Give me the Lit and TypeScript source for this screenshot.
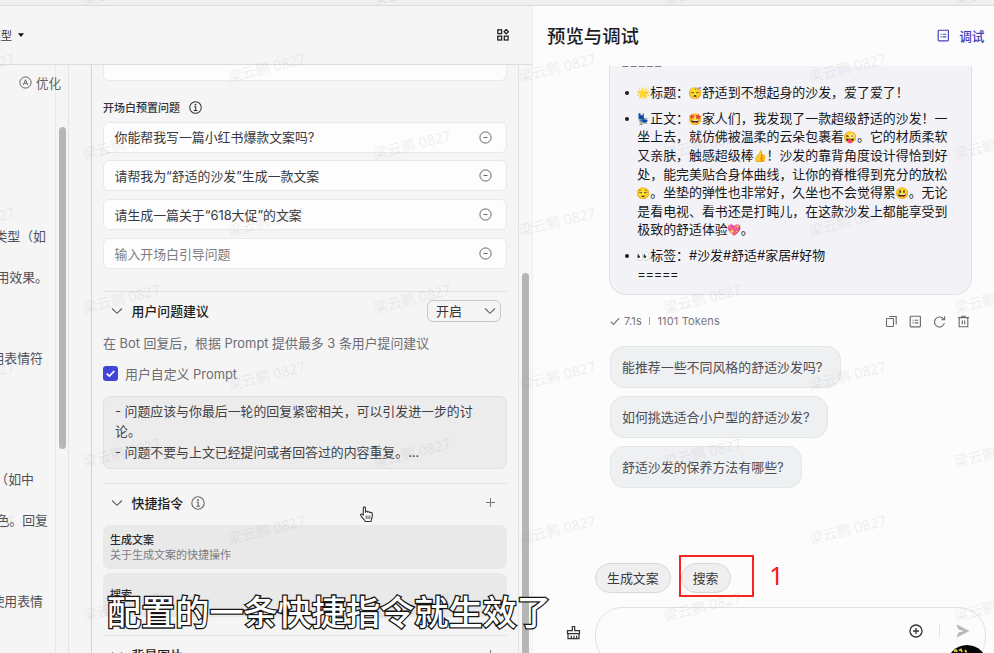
import { LitElement, html, css, svg, nothing } from "lit";
import { customElement } from "lit/decorators.js";

const infoIcon = (size: number) => html`<svg class="ic" width=${size} height=${size} viewBox="0 0 14 14" fill="none" stroke="currentColor" stroke-width="1.1">
  <circle cx="7" cy="7" r="6.2" /><path d="M5.6 6.2h1.6v3.9M5.2 10.2h3.8" /><circle cx="7" cy="3.9" r=".45" fill="currentColor" /></svg>`;
const minusIcon = html`<svg class="ic" width="13" height="13" viewBox="0 0 13 13" fill="none" stroke="currentColor" stroke-width="1">
  <circle cx="6.5" cy="6.5" r="5.6" /><path d="M4.5 6.5h4" /></svg>`;
const chevron = html`<svg class="ic" width="12" height="8" viewBox="0 0 12 8" fill="none" stroke="currentColor" stroke-width="1.1"><path d="M1 1.5 6 6.3 11 1.5" /></svg>`;
const listIcon = html`<svg class="ic" width="13" height="13" viewBox="0 0 13 13" fill="none" stroke="currentColor" stroke-width="1.15">
  <rect x="1.2" y="1.2" width="10.2" height="10.6" rx=".8" /><path d="M5.8 5.2h3.4M5.8 7.8h3.4" /><path d="M3.6 5.2h1.1M3.6 7.8h1.1" /></svg>`;
const copyIcon = html`<svg class="ic" width="13" height="13" viewBox="0 0 13 13" fill="none" stroke="currentColor" stroke-width="1.1">
  <rect x="1.5" y="3.5" width="7" height="8" rx=".8" /><path d="M4.2 1.5h7v8" /></svg>`;
const refreshIcon = html`<svg class="ic" width="13" height="13" viewBox="0 0 13 13" fill="none" stroke="currentColor" stroke-width="1.1">
  <path d="M10.8 4.4A5 5 0 1 0 11.4 8" /><path d="M11.6 1.2v3.5H8.2" /></svg>`;
const trashIcon = html`<svg class="ic" width="13" height="13" viewBox="0 0 13 13" fill="none" stroke="currentColor" stroke-width="1.1">
  <path d="M1 2.6h11M4.8 2.3v-1h3.4v1M2.2 2.8v9h8.600v-9M5.300 5.400v3.800M7.700 5.400v3.800" /></svg>`;
const plusIcon = html`<svg class="ic plus" width="11" height="11" viewBox="0 0 11 11" stroke="currentColor"><path d="M1 5.5h9M5.5 1v9" /></svg>`;

const presets = ["你能帮我写一篇小红书爆款文案吗?", "请帮我为“舒适的沙发”生成一款文案", "请生成一篇关于“618大促”的文案"];
const promptLines = ["类型（如", "", "用效果。", "", "", "", "用表情符", "", "", "", "", "", "（如中", "", "色。回复", "", "", "", "使用表情"];
const promptEnds = [46, 0, 48, 0, 0, 0, 43, 0, 0, 0, 0, 0, 34, 0, 48, 0, 0, 0, 43];
const suggestions = ["能推荐一些不同风格的舒适沙发吗?", "如何挑选适合小户型的舒适沙发?", "舒适沙发的保养方法有哪些?"];

const e = (glyph: string) => html`<span class="emoji">${glyph}</span>`;

@customElement("water-mark")
class WaterMark extends LitElement {
  static styles = css`
    :host { position: absolute; inset: 0; overflow: hidden; pointer-events: none; }
    svg { display: block; }
    text { font: 14.3px "Noto Sans", "Noto Sans CJK SC", sans-serif; fill: #777b84; fill-opacity: .12; text-anchor: middle; }
  `;
  render() {
    const marks = [];
    for (let row = 0; row < 9; row++) {
      for (let col = -1; col < 4; col++) {
        const x = (row % 2 ? 266.5 : 121.5) + col * 290.5;
        const y = -9 + row * 77;
        marks.push(svg`<text transform="translate(${x} ${y}) rotate(-14)" y="5">梁云鹏 0827</text>`);
      }
    }
    return html`<svg width="994" height="653">${marks}</svg>`;
  }
}

@customElement("config-panel")
class ConfigPanel extends LitElement {
  static styles = css`
    :host { display: flex; flex-direction: column; box-sizing: border-box; flex: none; width: 427px; height: 588px; padding: 0 11px 0 11px; overflow: hidden; border-right: 1px solid #e3e3e5; color: #3a3a3e; font-size: 12.9px; }
    .ic { display: block; flex: none; }
    .field { flex: none; display: flex; align-items: center; justify-content: space-between; box-sizing: border-box; width: 403.5px; height: 31px; margin-bottom: 7.9px; padding: 0 14px 0 10.5px; background: #fdfdfd; border: 1px solid #e9e9ea; border-radius: 6px; }
    .field .ic { color: #66666a; }
    .field span { position: relative; top: -.5px; }
    .cut { height: 15.5px; border-top: 0; border-radius: 0 0 6px 6px; margin-bottom: 16.500px; }
    .empty { color: #7d7d82; }
    .label { flex: none; display: flex; align-items: center; gap: 9px; height: 20px; margin-bottom: 4.5px; font-size: 11px; font-weight: 500; color: #333338; }
    .rule { flex: none; width: 404px; height: 1px; background: #dfdfe1; }
    .rule.gap { margin-top: 14px; }
    .head { flex: none; display: flex; align-items: center; box-sizing: border-box; width: 404px; height: 39px; padding: 0 6px 1.5px 8px; font-size: 12.9px; font-weight: 500; color: #1d1d20; }
    .head.shortcuts { height: 41px; padding-bottom: 4px; }
    .head > .ic:first-child { margin-right: 8.5px; color: #5c5c60; }
    .head .name { flex: none; }
    .head .info { margin-left: 8px; color: #66666a; }
    .select { display: flex; align-items: center; justify-content: space-between; box-sizing: border-box; width: 74px; height: 22px; margin-left: auto; padding: 0 4.5px 0 8px; border: 1px solid #c9c9cc; border-radius: 6px; font-weight: 400; color: #333338; }
    .select .ic { color: #66666a; }
    .plus { margin-left: auto; margin-right: 5px; color: #77777b; }
    .hint { flex: none; height: 26px; line-height: 26px; color: #6d6d71; white-space: nowrap; }
    .check { flex: none; display: flex; align-items: center; gap: 7px; height: 20px; margin-top: 6.500px; margin-bottom: .5px; color: #6d6d71; }
    .area { flex: none; box-sizing: border-box; width: 404px; height: 73px; margin: 12px 0 14px; padding: 5px 11px 0; overflow: hidden; background: #ececed; border: 1px solid #e0e0e2; border-radius: 7px; line-height: 20.3px; color: #414145; white-space: nowrap; }
    .area div { height: 20.3px; }
    .card { flex: none; box-sizing: border-box; width: 404px; height: 44px; margin-bottom: 4px; padding: 7.5px 7px 0; border-radius: 7px; background: #e9e9ea; font-size: 11px; line-height: 15px; color: #7c7c80; }
    .card b { display: block; font-weight: 500; color: #2b2b2f; }
    .low { padding-top: 14.5px; }
  `;
  render() {
    return html`
      <div class="field cut"></div>
      <div class="label">开场白预置问题 ${infoIcon(13)}</div>
      ${presets.map((p) => html`<div class="field"><span>${p}</span>${minusIcon}</div>`)}
      <div class="field empty"><span>输入开场白引导问题</span>${minusIcon}</div>
      <div class="rule gap"></div>
      <div class="head">${chevron}<span class="name">用户问题建议</span><div class="select">开启${chevron}</div></div>
      <div class="hint">在 Bot 回复后，根据 Prompt 提供最多 3 条用户提问建议</div>
      <div class="check">
        <svg class="ic" width="15" height="15" viewBox="0 0 15 15"><rect width="15" height="15" rx="3" fill="#4144d6" /><path d="M3.7 7.6 6.4 10.1 11.3 5" fill="none" stroke="#fff" stroke-width="1.8" /></svg>
        <span>用户自定义 Prompt</span>
      </div>
      <div class="area"><div>- 问题应该与你最后一轮的回复紧密相关，可以引发进一步的讨</div><div>论。</div><div>- 问题不要与上文已经提问或者回答过的内容重复。...</div></div>
      <div class="rule"></div>
      <div class="head shortcuts">${chevron}<span class="name">快捷指令</span><span class="info">${infoIcon(14)}</span>${plusIcon}</div>
      <div class="card"><b>生成文案</b>关于生成文案的快捷操作</div>
      <div class="card low"><b>搜索</b></div>
      <div class="rule gap"></div>
      <div class="head">${chevron}<span class="name">背景图片</span>${plusIcon}</div>
    `;
  }
}

@customElement("preview-panel")
class PreviewPanel extends LitElement {
  static styles = css`
    :host { display: flex; flex-direction: column; flex: none; box-sizing: border-box; width: 462px; height: 647px; background: #fcfcfc; border-left: 1px solid #efeff1; overflow: hidden; font-size: 12.93px; }
    .ic { display: block; flex: none; }
    .top { flex: none; display: flex; align-items: center; justify-content: space-between; box-sizing: border-box; height: 60px; padding: 0 9.5px 2px 14px; }
    .title { font-size: 18.4px; font-weight: 500; color: #1b1b1e; }
    .debug { display: flex; align-items: center; gap: 9px; font-size: 12.7px; font-weight: 500; color: #4040bd; }
    .bubble { flex: none; box-sizing: border-box; width: 363px; height: 229px; margin-left: 76px; padding: 0 13px 0 17px; overflow: hidden; background: #f3f3f7; border: 1px solid #e2e2e6; border-top: 0; border-radius: 0 0 17px 17px; color: #17171a; line-height: 18.6px; white-space: nowrap; }
    .sep { height: 18px; margin: -11px 0 10px -6px; line-height: 18px; color: #77777c; }
    .sep, .eq { letter-spacing: -.35px; }
    .item { display: flex; margin-bottom: 7.3px; }
    .dot { flex: none; width: 4px; height: 4px; margin: 8px 8.3px 0 -2px; border-radius: 50%; background: #1c1c20; }
    .emoji { display: inline-flex; justify-content: center; width: 12.93px; font-family: "Noto Color Emoji", sans-serif; font-size: 11.3px; line-height: 12px; }
    .meta { flex: none; display: flex; align-items: center; height: 14px; margin: 19px 23px 18px 77px; font-size: 11px; letter-spacing: .15px; color: #77777c; }
    .secs { margin-left: 4px; }
    .bar { width: 1px; height: 8px; margin: 0 7.5px 0 7px; background: #a5a5a9; }
    .tools { display: flex; gap: 11.1px; margin-left: auto; margin-right: 1px; color: #69696e; }
    .asks { flex: none; display: flex; flex-direction: column; align-items: flex-start; gap: 8px; margin-left: 76.5px; }
    .ask { display: flex; align-items: center; box-sizing: border-box; height: 42px; padding: 0 17.5px 2px 11.5px; background: #eff0f2; border: 1px solid #e1e6e9; border-radius: 14px; color: #4c4c52; }
    .chips { flex: none; display: flex; gap: 10px; margin: 75px 0 0 62px; }
    .chip { display: flex; align-items: center; justify-content: center; box-sizing: border-box; height: 30px; padding: 0 11px 2px; border: 1px solid #d8d8da; border-radius: 15px; background: #efeff0; color: #3c3c40; }
    .compose { flex: none; display: flex; margin: 14px 0 0 32.500px; color: #333336; }
    .compose > .ic { margin-top: 17.5px; }
    .box { display: flex; box-sizing: border-box; width: 391px; height: 58px; margin-left: 14px; padding: 16px 15px 0; justify-content: flex-end; border: 1px solid #e2e2e4; border-radius: 27px; }
    .split { width: 1px; height: 14px; margin: 0 16px; background: #e6e6e8; }
  `;
  render() {
    return html`
      <div class="top"><span class="title">预览与调试</span><span class="debug">${listIcon}调试</span></div>
      <div class="bubble">
        <div class="sep">=====</div>
        <div class="item"><i class="dot"></i><div>${e("🌟")}标题：${e("😴")}舒适到不想起身的沙发，爱了爱了！</div></div>
        <div class="item"><i class="dot"></i><div>${e("💺")}正文：${e("🤩")}家人们，我发现了一款超级舒适的沙发！一<br />坐上去，就仿佛被温柔的云朵包裹着${e("😜")}。它的材质柔软<br />又亲肤，触感超级棒${e("👍")}！沙发的靠背角度设计得恰到好<br />处，能完美贴合身体曲线，让你的脊椎得到充分的放松<br />${e("😌")}。坐垫的弹性也非常好，久坐也不会觉得累${e("😃")}。无论<br />是看电视、看书还是打盹儿，在这款沙发上都能享受到<br />极致的舒适体验${e("💖")}。</div></div>
        <div class="item"><i class="dot"></i><div>${e("👀")}标签：#沙发#舒适#家居#好物<br /><span class="eq">=====</span></div></div>
      </div>
      <div class="meta">
        <svg class="ic" width="10" height="9" viewBox="0 0 10 9" fill="none" stroke="currentColor" stroke-width="1.2"><path d="M.8 4.6 3.5 7.4 9.2 1.2" /></svg>
        <span class="secs">7.1s</span><i class="bar"></i><span>1101 Tokens</span>
        <div class="tools">${copyIcon}${listIcon}${refreshIcon}${trashIcon}</div>
      </div>
      <div class="asks">${suggestions.map((s) => html`<div class="ask">${s}</div>`)}</div>
      <div class="chips"><div class="chip">生成文案</div><div class="chip">搜索</div></div>
      <div class="compose">
        <svg class="ic" width="15" height="15" viewBox="0 0 15 15" fill="none" stroke="currentColor" stroke-width="1.2"><path d="M6.3 5.6V1.500h2.400v4.100h4.800v3H1.500v-3zM2 8.600v5h11v-5M5.300 13.400v-2.600M8 13.400v-2.600M10.600 13.400v-2.600M1.500 5.600h5" /></svg>
        <div class="box">
          <svg class="ic" width="14" height="14" viewBox="0 0 14 14" fill="none" stroke="currentColor" stroke-width="1.3"><circle cx="7" cy="7" r="6" /><path d="M4 7h6M7 4v6" /></svg>
          <i class="split"></i>
          <svg class="ic" width="14" height="14" viewBox="0 0 14 14" fill="#b9b9bc"><path d="M.3.2 13.6 7 .3 13.8 2.500 8.400 8 7 2.500 5.600z" /></svg>
        </div>
      </div>
    `;
  }
}

@customElement("app-root")
class AppRoot extends LitElement {
  static styles = css`
    :host { display: block; position: relative; width: 994px; height: 653px; overflow: hidden; background: #f5f5f5; font-family: Inter, "Noto Sans CJK SC", sans-serif; }
    .ic { display: block; flex: none; }
    .strip { box-sizing: border-box; height: 6px; background: #efeff1; border-bottom: 1px solid #dcdcde; }
    .main { display: flex; }
    .left { width: 532px; height: 647px; flex: none; }
    .bar { display: flex; align-items: center; justify-content: space-between; box-sizing: border-box; height: 59px; padding-right: 23px; border-bottom: 1px solid #dcdcde; }
    .model { display: flex; align-items: center; gap: 6px; margin-left: -10.5px; font-size: 11.3px; color: #3a3a3e; }
    .cols { display: flex; }
    .prompt { box-sizing: border-box; width: 56px; height: 588px; flex: none; border-right: 1px solid #e9e9ea; font-size: 12.9px; color: #515156; }
    .optimize { display: flex; align-items: center; gap: 4px; box-sizing: border-box; height: 20px; margin: 7.500px 0 134.500px 19px; font-size: 12.6px; color: #626267; white-space: nowrap; }
    .line { display: flex; justify-content: flex-end; height: 20.28px; line-height: 20.28px; white-space: nowrap; }
    .track { box-sizing: border-box; width: 13px; height: 588px; flex: none; }
    .t1 { padding: 62px 3px 0 2.5px; border-right: 1px solid #e4e4e6; }
    .thumb { width: 7px; height: 322px; border-radius: 4px; background: #b6b6b7; }
    .space { width: 23px; flex: none; box-sizing: border-box; border-right: 1px solid #d4d4d6; }
    .t2 { padding: 208px 3px 0; background: #f7f7f7; }
    .t2 .thumb { height: 400px; }
    .caption { position: absolute; left: 107px; top: 584.5px; font: 500 34.15px/50px "Noto Sans CJK SC", sans-serif; color: #fff; -webkit-text-stroke: 2.6px #161616; paint-order: stroke fill; white-space: nowrap; }
    .mark { position: absolute; left: 679px; top: 555px; box-sizing: border-box; width: 75px; height: 42px; border: 2px solid #f4261d; }
    .num { position: absolute; left: 769px; top: 560px; font: 26px/30px "Noto Sans", sans-serif; color: #fa1a1a; }
    .hand { position: absolute; left: 358.5px; top: 504.5px; }
    .ball { position: absolute; left: 946px; top: 645px; }
  `;
  render() {
    return html`
      <div class="strip"></div>
      <div class="main">
        <div class="left">
          <div class="bar">
            <div class="model">模型 <svg class="ic" width="6" height="4" viewBox="0 0 6 4"><path d="M0 .2h6L3 4z" fill="#111" /></svg></div>
            <svg class="ic" width="12" height="12" viewBox="0 0 12 12" fill="none" stroke="#222" stroke-width="1.3"><rect x=".8" y=".8" width="3.8" height="3.8" /><path d="M9.2.5 11.300 2.700 9.200 4.900 7.100 2.700z" /><rect x=".8" y="7.2" width="3.8" height="3.8" /><rect x="7.3" y="7.2" width="3.8" height="3.8" /></svg>
          </div>
          <div class="cols">
            <div class="prompt">
              <div class="optimize">
                <svg class="ic" width="13" height="13" viewBox="0 0 13 13" fill="none" stroke="currentColor"><circle cx="6.5" cy="6.5" r="5.6" /><path d="M4.3 9 6.5 3.8 8.7 9M5.2 7.3h2.6" /></svg>优化
              </div>
              ${promptLines.map((t, i) => html`<div class="line" style="width:${promptEnds[i]}px">${t || nothing}</div>`)}
            </div>
            <div class="track t1"><div class="thumb"></div></div>
            <div class="space"></div>
            <config-panel></config-panel>
            <div class="track t2"><div class="thumb"></div></div>
          </div>
        </div>
        <preview-panel></preview-panel>
      </div>
      <water-mark></water-mark>
      <div class="caption">配置的一条快捷指令就生效了</div>
      <svg class="hand" width="16" height="18" viewBox="0 0 16 18" fill="#fff" stroke="#333" stroke-width="1.1" stroke-linejoin="round"><path d="M4.3 10.2V3.1c0-1.7 2.2-1.7 2.2 0v4.1l.3-.6c.6-.7 1.9-.3 2 .7.5-.8 2-.6 2.2.5.6-.7 2.2-.4 2.3.9.2 2.9-.1 4.2-.9 5.6l-.3 2.2H6.4C5 14.3 3 12.7 1.8 10.5 1 8.9 2.9 8.2 4.3 10.2z" /><path d="M7.2 10.5v3.5M9 10.5v3.5M10.8 10.5v3.5" stroke-width=".8" /></svg>
      <div class="mark"></div>
      <div class="num">1</div>
      <svg class="ball" width="42" height="8" viewBox="0 0 42 8"><circle cx="21" cy="20" r="20" fill="#060606" /><path d="M8 6.5 10 5l1 2M13 5.5l2-1 1 2.5M19 5l1.500 2.500" stroke="#e6cf3c" stroke-width="1.7" fill="none" /></svg>
    `;
  }
}
